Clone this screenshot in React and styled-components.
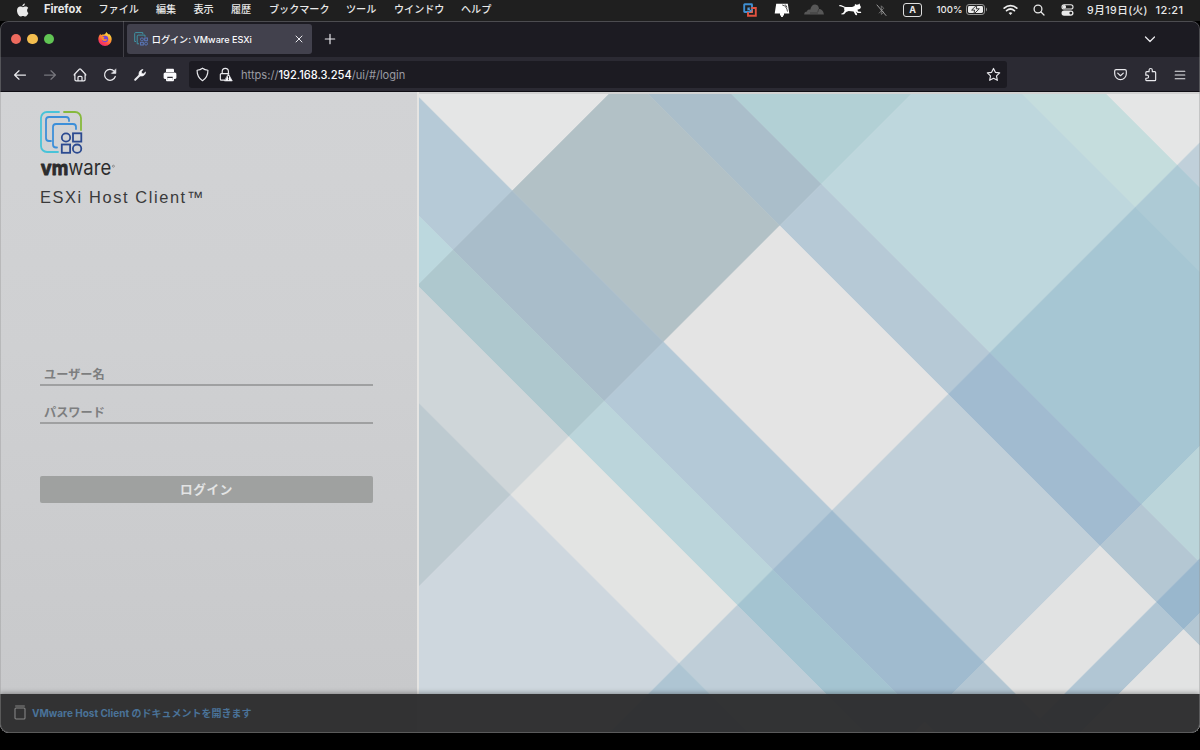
import React from 'react';
import styled, { createGlobalStyle } from 'styled-components';

const GlobalStyle = createGlobalStyle`
  * { box-sizing: border-box; }
  body {
    margin: 0;
    background: #000;
    font-family: Inter, "Noto Sans CJK JP", sans-serif;
  }
  svg { display: block; flex: none; }
`;

const Desktop = styled.div`
  width: 1200px;
  height: 750px;
  display: flex;
  flex-direction: column;
  background: #000;
  overflow: hidden;
`;

/* ---------- macOS menu bar ---------- */

const MenuBar = styled.header`
  height: 21px;
  flex: none;
  display: flex;
  align-items: center;
  padding: 0 10px 2px 16px;
  background: #1f1f1f;
  color: #e9e9e9;
`;

const MenuItem = styled.span`
  width: ${(p) => p.$w}px;
  font-size: 10.1px;
  font-weight: 500;
  line-height: 19px;
  white-space: nowrap;
`;

const AppName = styled(MenuItem)`
  margin-left: 15px;
  font-size: 11.1px;
  font-weight: 700;
`;

const StatusItems = styled.div`
  margin-left: auto;
  display: flex;
  align-items: center;
  height: 19px;
`;

const Status = styled.span`
  width: ${(p) => p.$w}px;
  display: flex;
  justify-content: center;
  align-items: center;
  font-size: ${(p) => p.$size || 10}px;
  font-weight: 500;
  letter-spacing: ${(p) => p.$spacing || 0}px;
  white-space: nowrap;
`;

const InputSource = styled.span`
  width: 19px;
  height: 14px;
  border: 1px solid #dedede;
  border-radius: 3px;
  font-size: 9px;
  font-weight: 700;
  line-height: 12px;
  text-align: center;
`;

/* ---------- Browser window ---------- */

const Window = styled.main`
  position: relative;
  height: 712px;
  flex: none;
  display: flex;
  flex-direction: column;
  border-radius: 8px 8px 9px 9px;
  overflow: hidden;
  background: #1c1b22;

  &::after {
    content: "";
    position: absolute;
    inset: 0;
    border: 1px solid rgba(150, 150, 150, 0.4);
    border-radius: inherit;
    pointer-events: none;
  }
`;

const TabStrip = styled.div`
  height: 36px;
  flex: none;
  display: flex;
  align-items: center;
`;

const WindowControls = styled.div`
  width: 124px;
  height: 36px;
  display: flex;
  align-items: center;
  gap: 6px;
  padding-left: 10.5px;
  border-right: 1px solid #414047;
`;

const Light = styled.i`
  width: 10.6px;
  height: 10.6px;
  border-radius: 50%;
  background: ${(p) => p.$color};
`;

const PinnedIcon = styled.span`
  margin-left: 37.5px;
`;

const Tab = styled.div`
  width: 184.500px;
  height: 30px;
  margin-left: 3.300px;
  padding: 0 8px 0 6.500px;
  display: flex;
  align-items: center;
  gap: 4px;
  border-radius: 3px;
  background: #42414d;
  color: #fbfbfe;
`;

const TabTitle = styled.span`
  flex: 1;
  font-size: 9.1px;
  font-weight: 500;
  white-space: nowrap;
`;

const NewTab = styled.span`
  margin-left: 12px;
`;

const TabList = styled.span`
  margin-left: auto;
  margin-right: 43px;
`;

const Toolbar = styled.div`
  height: 34px;
  flex: none;
  display: flex;
  align-items: center;
  padding: 1px 5px 0;
  background: #2b2a33;
`;

const ToolButton = styled.span`
  width: 30px;
  height: 28px;
  display: flex;
  align-items: center;
  justify-content: center;
  opacity: ${(p) => (p.$dim ? 0.4 : 1)};
`;

const UrlBar = styled.div`
  width: 818px;
  height: 27px;
  margin: 0 98px 0 4px;
  padding: 0 6px 0 6px;
  display: flex;
  align-items: center;
  border-radius: 3px;
  background: #1c1b22;
`;

const Url = styled.span`
  flex: 1;
  margin-left: 8px;
  font-size: 11.1px;
  color: #9b9ba2;

  b {
    font-weight: 500;
    color: #fbfbfe;
  }
`;

const LockSlot = styled.span`
  margin-left: 8px;
`;

/* ---------- Login page ---------- */

const Page = styled.div`
  position: relative;
  flex: 1;
  display: flex;
  border-top: 1px solid #0f0e14;
  background: #d2d2d2;
`;

const LoginPanel = styled.section`
  width: 419px;
  flex: none;
  display: flex;
  flex-direction: column;
  padding: 19px 44px 0 40px;
  border-right: 2px solid #e5e4e2;
  background: linear-gradient(#d2d3d5, #cfd0d2 40%, #c8c9cb 94%);
`;

const Product = styled.h1`
  margin: 7px 0 0;
  height: 24px;
  font: 400 16.4px/24px "Liberation Sans", sans-serif;
  letter-spacing: 1.6px;
  color: #3a3a3b;
  white-space: nowrap;
`;

const Fields = styled.form`
  display: flex;
  flex-direction: column;
  margin-top: 139px;
`;

const Field = styled.label`
  height: 38px;
  padding: 18px 0 0 4px;
  border-bottom: 2px solid #9fa0a1;
  font-size: 12.2px;
  font-weight: 700;
  line-height: 18px;
  color: #7d7e7f;
`;

const LoginButton = styled.button`
  height: 27px;
  margin-top: 52px;
  padding: 0 0 3px;
  border: 0;
  border-radius: 2px;
  background: #9fa1a0;
  color: #e3e4e4;
  font: 700 12.6px/23px "Noto Sans CJK JP", sans-serif;
  letter-spacing: 0.6px;
`;

const Artwork = styled.div`
  flex: 1;
  padding-top: 2px;
`;

const Footer = styled.footer`
  position: absolute;
  left: 0;
  right: 0;
  bottom: 0;
  height: 39px;
  display: flex;
  align-items: center;
  gap: 6.500px;
  padding: 0 0 3px 13.500px;
  background: rgba(45, 45, 46, 0.965);
  box-shadow: 0 -1px 5px rgba(0, 0, 0, 0.35);
`;

const DocLink = styled.a`
  font-size: 10px;
  font-weight: 700;
  color: #4a7399;
  white-space: nowrap;
`;

/* ---------- Background artwork ---------- */

/* Each band lies between two descending diagonals (y - x) and is cut
   into cells by ascending diagonals (x + y). */
const BANDS = [
  { d: [-1300, -1012], cells: [[300, 1342.5, '#e5e6e6'], [1342.5, 1646, '#c0d0da']] },
  { d: [-1012, -928], cells: [[300, 1342.5, '#c5dddd'], [1342.5, 1646, '#adcad5']] },
  { d: [-928, -637], cells: [[300, 1005.5, '#b2d0d5'], [1005.5, 1342.5, '#bed7dd'], [1342.5, 1646, '#a6c6d3'], [1646, 1758.5, '#bbd5da'], [1758.5, 1813, '#99b7cd']] },
  { d: [-637, -554], cells: [[300, 1005.5, '#aabeca'], [1005.5, 1342.5, '#b6c9d6'], [1342.5, 1646, '#a1bbd0'], [1646, 1758.5, '#b4c7d3'], [1758.5, 1813, '#99b7cd'], [1813, 2000, '#b4c7d3']] },
  { d: [-554, -321.5], cells: [[300, 703, '#e5e6e6'], [703, 1005.5, '#b2c1c6'], [1005.5, 1342.5, '#e4e4e4'], [1342.5, 1646, '#c0cfd9'], [1646, 1758.5, '#e2e3e3'], [1758.5, 1813, '#b1c6d4'], [1813, 2000, '#e2e3e3']] },
  { d: [-321.5, -203], cells: [[300, 703, '#b6cad7'], [703, 1005.5, '#a9bdca'], [1005.5, 1342.5, '#b4c9d7'], [1342.5, 1646, '#a0bbcf'], [1646, 2000, '#b3c6d3']] },
  { d: [-203, -132], cells: [[300, 703, '#bcd8de'], [703, 1005.5, '#aec8ce'], [1005.5, 1342.5, '#bbd5db'], [1342.5, 1646, '#a4c4d1']] },
  { d: [-132, -15.5], cells: [[300, 1005.5, '#cfd6d9'], [1005.5, 1342.5, '#e3e4e3'], [1342.5, 1646, '#bfced8']] },
  { d: [-15.5, 400], cells: [[300, 1005.5, '#bdcad0'], [1005.5, 1342.5, '#ced7de'], [1342.5, 1646, '#aec5d3']] },
];

const corner = (d, s) => `${(s - d) / 2},${(s + d) / 2}`;

function Diagonals() {
  return (
    <svg width="781" height="638" viewBox="419 94 781 638">
      <rect x="419" y="94" width="781" height="638" fill="#e4e4e4" />
      {BANDS.map(({ d: [a, b], cells }) =>
        cells.map(([from, to, fill]) => (
          <polygon
            key={`${a}/${from}`}
            points={[corner(a, from), corner(b, from), corner(b, to), corner(a, to)].join(' ')}
            fill={fill}
            stroke={fill}
            strokeWidth="0.5"
          />
        ))
      )}
    </svg>
  );
}

/* ---------- Icons ---------- */

const Stroke = ({ w = 16, h = 16, box = '0 0 16 16', width = 1.25, color = '#e8e8ec', children }) => (
  <svg width={w} height={h} viewBox={box} fill="none" stroke={color} strokeWidth={width} strokeLinecap="round" strokeLinejoin="round">
    {children}
  </svg>
);

const AppleIcon = () => (
  <svg width="13" height="14" viewBox="0 0 13 14" fill="#e9e9e9">
    <path d="M8.9.4c.1 1.5-1.2 2.9-2.6 2.8C6.2 1.8 7.5.5 8.9.4zM11.1 7.3c0-1.3.8-2.1 1.2-2.4-.8-1.1-2-1.300-2.500-1.300-1.300-.1-2.200.7-2.900.7-.6 0-1.500-.7-2.500-.7C2.600 3.700 1 5 1 7.500c0 2.800 2 6 3.600 6 .9 0 1.200-.6 2.300-.6 1.100 0 1.300.6 2.300.6 1.400 0 2.600-2.100 3.200-3.500-1-.5-1.300-1.500-1.300-2.700z" />
  </svg>
);

const FusionIcon = () => (
  <svg width="14" height="14" viewBox="0 0 14 14" fill="none">
    <rect x="1.200" y="1.200" width="7.800" height="7.800" rx=".5" stroke="#3f8fd2" strokeWidth="1.900" />
    <path d="M8.300 5h4.500v7.800H5V9" stroke="#e2523f" strokeWidth="1.900" />
    <path d="M5 5.200l4 3.900M5 7.400V5h2.300" stroke="#4c9bdc" strokeWidth="1.200" />
    <path d="M9.300 6.800v2.500H6.800" stroke="#e7644f" strokeWidth="1.200" />
  </svg>
);

const MonitorIcon = () => (
  <svg width="16" height="14" viewBox="0 0 16 14">
    <path d="M2.200.8h11.600l1.500 9.800H.7zM6 10.600h4v1.900H8.900V14H7.100v-1.500H6z" fill="#fff" />
    <path d="M8.300 2c3.300.7 4.700 3 5.200 6.600M11.200 1.500l1.800 2.800" stroke="#1f1f1f" strokeWidth=".8" fill="none" />
  </svg>
);

const CloudIcon = () => (
  <svg width="20" height="11" viewBox="0 0 20 11">
    <path d="M.2 10.600c0-2 1-2.900 2.800-3.100C3.300 5.500 5 5 6.200 5.800 7 2 9 .3 11.300.5c2.500.2 3.500 2 3.700 4.400 2.900 0 4.800 2.600 4.900 5.700z" fill="#575757" />
    <path d="M6 9h8M14.700 5l-.9 3" stroke="#343434" strokeWidth=".7" fill="none" />
  </svg>
);

const CatIcon = () => (
  <svg width="23" height="13" viewBox="0 0 23 13">
    <path d="M.8 2.600c2.200-.2 3.500 1.600 6 1.900" stroke="#fff" strokeWidth="1.200" fill="none" strokeLinecap="round" />
    <path d="M5.800 4.200c2.300-.7 6.200.8 9.800-1.300L16 1l1.500.8 1.800-.2L20.600.6l.5 2c.9.9 1 2.200.2 3-.8.8-2 .8-2.900 1.100l.8 1.700 2.800.3.200 1.300-3.500.1-2-1.500 1.500 2.700-.3 1-1.400-.3-1.900-3.400-4.900-.6-2.600 1-2 2.300-2.600.3-.1-1 1.700-.6 1.400-2.300c-.3-1.400-.7-2.600.3-3.500z" fill="#fff" />
  </svg>
);

const BluetoothOffIcon = () => (
  <Stroke w={11} h={14} box="0 0 11 14" width={0.9} color="#777">
    <path d="M3.200 10l4.500-4.700L5.300 2.800v8.600L7.700 9.300 6.500 8" />
    <path d="M1 2l9 10.500" stroke="#a8a8a8" />
  </Stroke>
);

const BatteryIcon = () => (
  <svg width="22" height="11" viewBox="0 0 22 11">
    <rect x=".5" y=".5" width="18" height="10" rx="2.600" fill="none" stroke="#969696" />
    <rect x="2" y="2" width="15" height="7" rx="1.400" fill="#ececec" />
    <path d="M20 3.600c1.300.4 1.300 3.400 0 3.800z" fill="#969696" />
    <path d="M10.800 1L5.600 6.100h3L7.900 10l5.400-5.200h-3z" fill="#ececec" stroke="#1f1f1f" strokeWidth=".9" />
  </svg>
);

const WifiIcon = () => (
  <Stroke w={15} h={12} box="0 0 15 12" width={1.7} color="#eee">
    <path d="M1.200 4.200c3.700-3.400 8.900-3.400 12.600 0M3.600 6.700c2.300-2 5.500-2 7.800 0" />
    <path d="M7.500 11L5.600 9c1-1 2.800-1 3.800 0z" fill="#eee" stroke="none" />
  </Stroke>
);

const SearchIcon = () => (
  <Stroke w={12} h={12} box="0 0 12 12" width={1.3} color="#e9e9e9">
    <circle cx="5" cy="5" r="3.900" />
    <path d="M8 8l3 3" />
  </Stroke>
);

const ControlCenterIcon = () => (
  <svg width="13" height="12" viewBox="0 0 13 12">
    <rect x="1" y=".8" width="11" height="4.200" rx="2.100" fill="none" stroke="#e9e9e9" strokeWidth="1.100" />
    <circle cx="3.300" cy="2.900" r="1.800" fill="#e9e9e9" />
    <rect x=".5" y="6.500" width="12" height="5.200" rx="2.600" fill="#e9e9e9" />
    <circle cx="9.800" cy="9.100" r="1.400" fill="#1f1f1f" />
  </svg>
);

const FirefoxIcon = () => (
  <svg width="14" height="14" viewBox="0 0 14 14">
    <defs>
      <linearGradient id="flame" x1=".8" y1="0" x2=".2" y2="1">
        <stop offset="0" stopColor="#fff04a" />
        <stop offset=".4" stopColor="#ff9a2e" />
        <stop offset=".75" stopColor="#ff4050" />
        <stop offset="1" stopColor="#e0247e" />
      </linearGradient>
    </defs>
    <path d="M8.300 0c.6 1.100 1.400 1.700 2.500 2.600l.4-.7c1.700 1.400 2.500 3.300 2.500 5.300A6.700 6.700 0 0 1 7 13.900 6.700 6.700 0 0 1 .3 7.200C.3 5 1.200 3.200 2.400 1.700l.5 1.500 1.300-.7C5.800 2.900 7.800 2 8.300 0z" fill="url(#flame)" />
    <circle cx="7" cy="7" r="3.200" fill="#7443d6" />
    <path d="M3 5.200c1.400-.8 2.800-.5 3.700.5-1.200.1-1.300 1-.5 1.400 1.200.6 2.100-.3 3 .3-.8 1.900-3.800 2.300-5.200.3z" fill="#ff8a2c" />
  </svg>
);

function CubesMark({ size }) {
  return (
    <svg width={size} height={size} viewBox="0 0 43 43" fill="none" strokeWidth="1.800" strokeLinecap="round">
      <path d="M19 1H7a6 6 0 0 0-6 6v28a6 6 0 0 0 6 6h11" stroke="#49c3d8" />
      <path d="M24 1h11a6 6 0 0 1 6 6v12" stroke="#86b93c" />
      <path d="M11 30H9a3 3 0 0 1-3-3V9a3 3 0 0 1 3-3h17a3 3 0 0 1 3 3v1" stroke="#3c8fd9" />
      <path d="M17 36.500h-1a3 3 0 0 1-3-3V16a3 3 0 0 1 3-3h17a3 3 0 0 1 3 3v2" stroke="#3c8fd9" />
      <g stroke="#2c4a90" strokeLinecap="butt">
        <circle cx="26" cy="26.500" r="4.200" />
        <rect x="33" y="22.300" width="8.300" height="8.300" />
        <rect x="21.800" y="33.500" width="8.300" height="8.300" />
        <circle cx="37.100" cy="37.700" r="4.200" />
      </g>
    </svg>
  );
}

const TabFavicon = () => (
  <svg width="14" height="14" viewBox="0 0 14 14" fill="none" strokeWidth="1">
    <path d="M2 9.500H.7V1.500c0-.6.3-.9.9-.9h7.200v1.600M5 11.800H3.200V4c0-.6.3-.9.9-.9H11v1.800" stroke="#3f93a4" />
    <g stroke="#5a78bd">
      <rect x="6.600" y="6" width="2.700" height="2.700" rx="1" />
      <rect x="10.700" y="6" width="2.700" height="2.700" />
      <rect x="6.600" y="10.300" width="2.700" height="2.700" />
      <rect x="10.700" y="10.300" width="2.700" height="2.700" rx="1" />
    </g>
  </svg>
);

const Wordmark = () => (
  <svg width="80" height="24" viewBox="0 0 80 24" fill="#2c2c2d" fontFamily="Inter, sans-serif">
    <text x=".8" y="21" fontSize="20" fontWeight="700" textLength="27.400" lengthAdjust="spacingAndGlyphs" stroke="#2c2c2d" strokeWidth=".9" strokeLinejoin="round">vm</text>
    <text x="28.200" y="21" fontSize="20.500" fontWeight="400" textLength="43" lengthAdjust="spacingAndGlyphs">ware</text>
    <circle cx="73.400" cy="12.200" r="1" fill="none" stroke="#6a6a6b" strokeWidth=".6" />
  </svg>
);

const BookIcon = () => (
  <svg width="12" height="15" viewBox="0 0 12 15" fill="none" stroke="#858585">
    <path d="M1.200 1h9.600" strokeWidth="1" />
    <rect x="1" y="3" width="10" height="11" rx="1" strokeWidth="1.100" />
  </svg>
);

const MENUS = [
  ['ファイル', 57.5], ['編集', 37.5], ['表示', 37.5], ['履歴', 38], ['ブックマーク', 77],
  ['ツール', 48], ['ウインドウ', 67], ['ヘルプ', 32],
];

export default function App() {
  return (
    <Desktop>
      <GlobalStyle />
      <MenuBar>
        <AppleIcon />
        <AppName $w={54.5}>Firefox</AppName>
        {MENUS.map(([label, w]) => <MenuItem key={label} $w={w}>{label}</MenuItem>)}
        <StatusItems>
          <Status $w={26}><FusionIcon /></Status>
          <Status $w={38}><MonitorIcon /></Status>
          <Status $w={26}><CloudIcon /></Status>
          <Status $w={46}><CatIcon /></Status>
          <Status $w={16}><BluetoothOffIcon /></Status>
          <Status $w={47}><InputSource>A</InputSource></Status>
          <Status $w={27} $size={9.6}>100%</Status>
          <Status $w={27}><BatteryIcon /></Status>
          <Status $w={40}><WifiIcon /></Status>
          <Status $w={18}><SearchIcon /></Status>
          <Status $w={38}><ControlCenterIcon /></Status>
          <Status $w={63} $size={10.6} $spacing={0.45}>9月19日(火)</Status>
          <Status $w={41} $size={11} $spacing={0.4}>12:21</Status>
        </StatusItems>
      </MenuBar>

      <Window>
        <TabStrip>
          <WindowControls>
            <Light $color="#ed6a5e" />
            <Light $color="#f4be4f" />
            <Light $color="#61c554" />
            <PinnedIcon><FirefoxIcon /></PinnedIcon>
          </WindowControls>
          <Tab>
            <TabFavicon />
            <TabTitle>ログイン: VMware ESXi</TabTitle>
            <Stroke w={10} h={10} box="0 0 10 10" width={1}><path d="M2 2l6 6M8 2L2 8" /></Stroke>
          </Tab>
          <NewTab><Stroke w={12} h={12} box="0 0 12 12" width={1.2}><path d="M6 1.300v9.400M1.300 6h9.400" /></Stroke></NewTab>
          <TabList><Stroke w={14} h={14} box="0 0 14 14" width={1.3}><path d="M2.500 5L7 9.500 11.500 5" /></Stroke></TabList>
        </TabStrip>

        <Toolbar>
          <ToolButton><Stroke><path d="M13.500 8H2.800M7 3.800L2.600 8 7 12.200" /></Stroke></ToolButton>
          <ToolButton $dim><Stroke><path d="M2.500 8h10.700M9 3.800L13.400 8 9 12.200" /></Stroke></ToolButton>
          <ToolButton>
            <Stroke>
              <path d="M2.300 8.200v-.7L7.300 2.300a1 1 0 0 1 1.400 0l5 5.200v.7M2.900 7v5.500c0 .8.500 1.300 1.300 1.300h7.600c.8 0 1.300-.5 1.300-1.300V7" />
              <path d="M6 13.600v-3.300c0-.6.4-1 1-1h2c.6 0 1 .4 1 1v3.300" />
            </Stroke>
          </ToolButton>
          <ToolButton>
            <Stroke>
              <path d="M13.300 9.500A5.500 5.500 0 1 1 12.200 4.200" />
              <path d="M13.900 2.200v4.200H9.700z" fill="#e8e8ec" strokeWidth=".6" />
            </Stroke>
          </ToolButton>
          <ToolButton>
            <Stroke w={14} h={14}>
              <path d="M2.500 13.500L8.300 7.700" strokeWidth="2.300" />
              <path d="M7.200 8.800C6 5.800 7.500 2.200 11.400 1.600L9.600 4.300l.4 2 2 .4 2.400-2.200c-.4 4.300-4 5.500-7.200 4.300z" fill="#fbfbfe" strokeWidth=".8" />
            </Stroke>
          </ToolButton>
          <ToolButton>
            <svg width="14" height="14" viewBox="0 0 14 14" fill="#fbfbfe">
              <path d="M4.200.8h5.600c.7 0 1.200.5 1.200 1.200V4H3V2c0-.7.500-1.200 1.200-1.200z" />
              <path fillRule="evenodd" d="M2.500 4.500h9c1.200 0 1.900.7 1.900 1.900v3.200c0 .8-.5 1.300-1.300 1.300H11V12c0 .8-.5 1.300-1.300 1.300H4.300C3.500 13.300 3 12.800 3 12v-1.100H1.900C1.100 10.900.6 10.400.6 9.600V6.400c0-1.200.7-1.900 1.900-1.900zM4.300 8.700v3.200h5.400V8.700z" />
              <path d="M4.300 10h5.400v2H4.300z" />
            </svg>
          </ToolButton>
          <UrlBar>
            <Stroke w={15} h={15}>
              <path d="M8 1.300c1.800 1.400 3.600 2 5.800 2.200 0 5-1.600 8.600-5.800 11.200C3.800 12.100 2.200 8.500 2.200 3.500 4.400 3.300 6.200 2.700 8 1.300z" />
            </Stroke>
            <LockSlot>
              <Stroke w={15} h={15}>
                <path d="M4.500 7V4.700a3.300 3.300 0 0 1 6.600 0V7M7 14H3.500a1 1 0 0 1-1-1V8a1 1 0 0 1 1-1h8" />
                <path d="M11.200 7.600l4 7.200H7.300z" fill="#fbfbfe" strokeWidth=".8" />
                <path d="M11.200 10v2M11.200 13.400v.1" stroke="#1c1b22" strokeWidth="1" />
              </Stroke>
            </LockSlot>
            <Url>https://<b>192.168.3.254</b>/ui/#/login</Url>
            <Stroke w={15} h={15}>
              <path d="M8 1.500l2 4.200 4.600.6-3.400 3.200.9 4.700L8 12l-4.100 2.200.9-4.700L1.400 6.300 6 5.700z" />
            </Stroke>
          </UrlBar>
          <ToolButton>
            <Stroke w={15} h={15}>
              <path d="M3.300 2.800h9.400c1 0 1.500.5 1.500 1.500v3a6.200 6.200 0 0 1-12.400 0v-3c0-1 .5-1.500 1.500-1.500zM5 6.500L8 9.300l3-2.800" />
            </Stroke>
          </ToolButton>
          <ToolButton>
            <Stroke w={15} h={15}>
              <path d="M6.500 5V3.300a1.700 1.700 0 0 1 3.400 0V5h2.600c.7 0 1 .4 1 1v7.500c0 .6-.3 1-1 1H4c-.6 0-1-.4-1-1V12h1.300a1.600 1.600 0 0 0 0-3.300H3V6c0-.6.4-1 1-1z" />
            </Stroke>
          </ToolButton>
          <ToolButton><Stroke w={14} h={14}><path d="M2.500 3.700h11M2.500 8h11M2.500 12.300h11" /></Stroke></ToolButton>
        </Toolbar>

        <Page>
          <LoginPanel>
            <CubesMark size={43} />
            <Wordmark />
            <Product>ESXi Host Client™</Product>
            <Fields>
              <Field>ユーザー名</Field>
              <Field>パスワード</Field>
              <LoginButton type="button">ログイン</LoginButton>
            </Fields>
          </LoginPanel>
          <Artwork><Diagonals /></Artwork>
          <Footer>
            <BookIcon />
            <DocLink>VMware Host Client のドキュメントを開きます</DocLink>
          </Footer>
        </Page>
      </Window>
    </Desktop>
  );
}
